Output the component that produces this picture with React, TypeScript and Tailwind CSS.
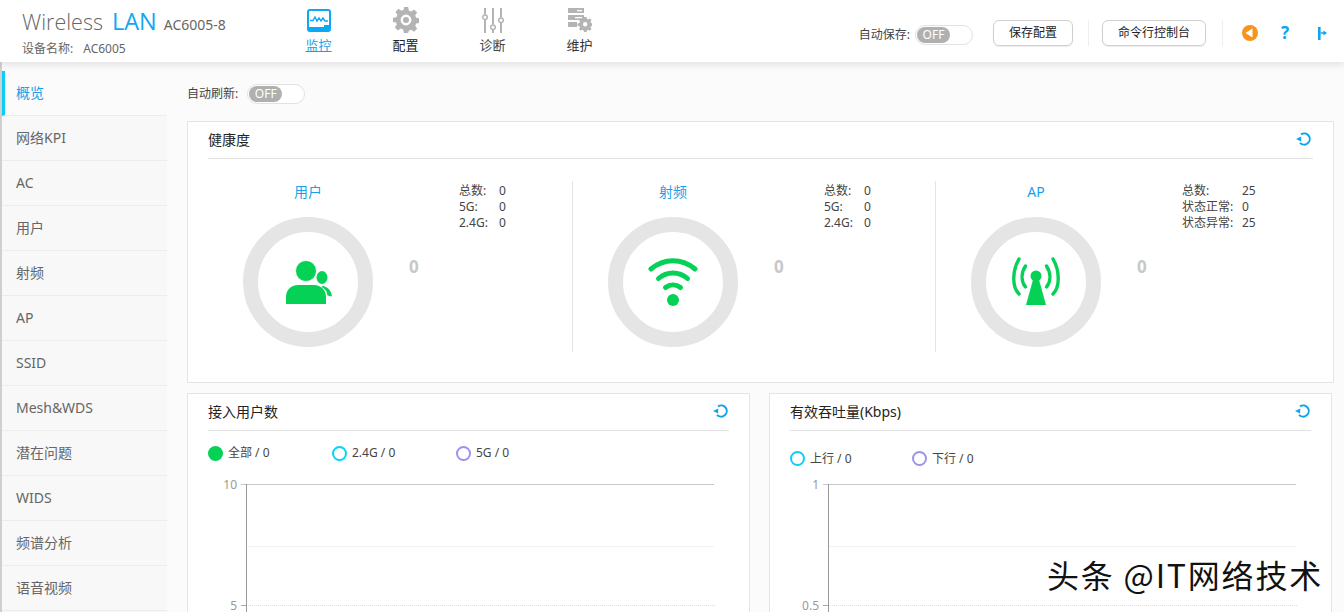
import React from 'react';

const font = 'font-["Noto_Sans","Noto_Sans_CJK_SC",sans-serif]';

const navItems = ['概览', '网络KPI', 'AC', '用户', '射频', 'AP', 'SSID', 'Mesh&WDS', '潜在问题', 'WIDS', '频谱分析', '语音视频'];

const Toggle = () => (
  <div className="flex h-[20px] w-[58px] items-center rounded-full border border-[#e2e2e2] bg-white pl-[1px]">
    <div className="flex h-[16px] w-[33px] items-center justify-center rounded-full bg-[#b0b0b0] text-[12px] leading-none text-white">OFF</div>
  </div>
);

const Refresh = () => (
  <svg width="15" height="14" viewBox="0 0 15 14" fill="none" className="shrink-0">
    <path d="M5 2.400A5.600 5.600 0 1 1 4 10.800" stroke="#0ea5e9" strokeWidth="2" />
    <path d="M0 7L5.200 4.400V9.600Z" fill="#0ea5e9" />
  </svg>
);

const MonitorIcon = () => (
  <svg width="24" height="23" viewBox="0 0 24 23" fill="none">
    <rect x="1" y="1" width="22" height="21" rx="2" stroke="#0aa8f5" strokeWidth="2" />
    <path d="M3 11.500H6L8 8L10 12L12 9L14 12L16 9L18 12H21" stroke="#0aa8f5" strokeWidth="1.400" />
    <path d="M1 18H17V16H23V22H1Z" fill="#0aa8f5" />
  </svg>
);

const GearIcon = () => (
  <svg width="26" height="26" viewBox="0 0 24 24" fill="#b4b4b4">
    <path fillRule="evenodd" d="M10 0h4l.6 3.200 2.200.9 2.700-1.800 2.800 2.800-1.800 2.700.9 2.200 3.200.6v4l-3.200.6-.9 2.200 1.800 2.700-2.800 2.800-2.700-1.800-2.200.9L14 24h-4l-.6-3.200-2.200-.9-2.700 1.800-2.800-2.800 1.800-2.700-.9-2.200L0 14v-4l3.200-.6.900-2.200-1.800-2.700 2.800-2.800 2.700 1.800 2.200-.9ZM12 7a5 5 0 1 0 0 10 5 5 0 0 0 0-10Z" />
    <circle cx="12" cy="12" r="2.800" />
  </svg>
);

const SlidersIcon = () => (
  <svg width="22" height="25" viewBox="0 0 22 25" fill="none" stroke="#b4b4b4" strokeWidth="2">
    <path d="M3 0V6.500M3 12V25M11 0V16.500M11 22V25M19 0V9.500M19 15V25" />
    <circle cx="3" cy="9.200" r="2.300" strokeWidth="1.500" />
    <circle cx="11" cy="19.200" r="2.300" strokeWidth="1.500" />
    <circle cx="19" cy="12.200" r="2.300" strokeWidth="1.500" />
  </svg>
);

const MaintainIcon = () => (
  <svg width="24" height="24" viewBox="0 0 24 24" fill="#b4b4b4">
    <rect x="0" y="0" width="16" height="5" />
    <rect x="0" y="7" width="16" height="5" />
    <rect x="0" y="14" width="9" height="5" />
    <rect x="9" y="2" width="5" height="1.300" fill="#fff" />
    <rect x="7" y="9" width="7" height="1.300" fill="#fff" />
    <path fillRule="evenodd" d="M16 10h2.500l.4 1.800 1.400.6 1.600-1 1.600 1.700-1 1.500.6 1.400 1.900.4v2.400l-1.900.4-.6 1.400 1 1.500-1.600 1.700-1.600-1-1.400.6-.4 1.800H16l-.4-1.800-1.400-.6-1.600 1-1.600-1.700 1-1.500-.6-1.400-1.900-.4v-2.400l1.900-.4.6-1.400-1-1.500 1.600-1.700 1.600 1 1.400-.6ZM17.200 15a2.200 2.200 0 1 0 0 4.400 2.200 2.200 0 0 0 0-4.400Z" transform="translate(0 -1)" />
  </svg>
);

const UserIcon = () => (
  <svg width="48" height="46" viewBox="0 0 48 46" fill="#04d156">
    <ellipse cx="38" cy="18.500" rx="5.500" ry="6.500" />
    <path d="M39 27C44 28 47.500 32 48 37.500L43.500 36.500C43 32 41 29.500 37 28Z" />
    <circle cx="22" cy="12" r="10.500" stroke="#fff" strokeWidth="0.800" />
    <path d="M2 45V38C2 30 8 26 14 26H30C37 26 42 31 42 38V45Z" />
  </svg>
);

const WifiIcon = () => (
  <svg width="50" height="50" viewBox="0 0 50 50" fill="none" stroke="#04d156" strokeWidth="5" strokeLinecap="round">
    <path d="M3 12C16 1 34 1 47 12" />
    <path d="M10.500 21.500C19 14 31 14 39.500 21.500" />
    <path d="M17.500 30.500C22 27 28 27 32.500 30.500" />
    <circle cx="25" cy="43" r="6" fill="#04d156" stroke="none" />
  </svg>
);

const ApIcon = () => (
  <svg width="50" height="50" viewBox="0 0 50 50" fill="none" stroke="#04d156" strokeWidth="3.400" strokeLinecap="round">
    <path d="M8 2C1 14 1 30 8 37" />
    <path d="M14.500 9C10 16 10 24 14.500 30" />
    <path d="M35.500 9C40 16 40 24 35.500 30" />
    <path d="M42 2C49 14 49 30 42 37" />
    <circle cx="25" cy="19" r="5.500" fill="#04d156" stroke="none" />
    <path d="M22.500 21H27.500L35 48H15Z" fill="#04d156" stroke="none" />
  </svg>
);

type HealthProps = {
  title: string;
  icon: React.ReactNode;
  stats: [string, string][];
  width: string;
  statsMl: string;
  divider?: boolean;
  statLabelW: string;
};

const HealthColumn = ({ title, icon, stats, width, statsMl, divider, statLabelW }: HealthProps) => (
  <div className={`flex h-[171px] ${width} shrink-0 ${divider ? 'border-r border-[#e4e4e4]' : ''}`}>
    <div className="flex w-[130px] shrink-0 flex-col items-center">
      <div className="h-[36px] pt-[1px] text-[14px] leading-[20px] text-[#1a9fe8]">{title}</div>
      <div className="flex h-[130px] w-[130px] items-center justify-center rounded-full border-[15px] border-[#e5e5e5]">{icon}</div>
    </div>
    <div className="ml-[36px] mt-[76px] w-[20px] shrink-0 text-[17px] font-bold leading-[20px] text-[#c8c8c8]">0</div>
    <div className={`${statsMl} mt-[2px] text-[12px] leading-[16px] text-[#444]`}>
      {stats.map(([label, value]) => (
        <div key={label} className="flex">
          <span className={statLabelW}>{label}</span>
          <span>{value}</span>
        </div>
      ))}
    </div>
  </div>
);

const Legend = ({ label, kind, width }: { label: string; kind: 'green' | 'cyan' | 'purple'; width: string }) => (
  <div className={`flex ${width} items-center gap-[5px] text-[12px] leading-[16px] text-[#444]`}>
    {kind === 'green' && <span className="h-[15px] w-[15px] rounded-full bg-[#04d156]" />}
    {kind === 'cyan' && <span className="h-[15px] w-[15px] rounded-full border-2 border-[#0cd0f5]" />}
    {kind === 'purple' && <span className="h-[15px] w-[15px] rounded-full border-2 border-[#9b93ec]" />}
    <span>{label}</span>
  </div>
);

const Chart = ({ top, mid, width }: { top: string; mid: string; width: number }) => (
  <svg width={width + 60} height="130" viewBox={`0 0 ${width + 60} 130`} className="block overflow-visible">
    <text x="29" y="5" textAnchor="end" fontSize="12" fill="#999">{top}</text>
    <text x="29" y="126" textAnchor="end" fontSize="12" fill="#999">{mid}</text>
    <path d={`M33 0.500H${width + 38}`} stroke="#c8c8c8" />
    <path d={`M38 62.500H${width + 38}`} stroke="#f2f2f2" />
    <path d="M33 121.500H38" stroke="#aaa" />
    <path d={`M38 121.500H${width + 40}`} stroke="#ddd" strokeDasharray="1 1" />
    <path d="M38.500 0V130" stroke="#999" />
  </svg>
);

export default function App() {
  return (
    <div className={`relative h-screen w-full overflow-hidden bg-[#fbfbfb] ${font}`}>
      <header className="relative z-10 flex h-[62px] items-start bg-white pl-[22px] shadow-[0_2px_8px_rgba(0,0,0,0.12)]">
        <div className="w-[253px] shrink-0 pt-[8px]">
          <div className="flex h-[26px] items-baseline">
            <span className='font-["Open_Sans",sans-serif] text-[21.500px] font-light leading-[26px] text-[#666]'>Wireless</span>
            <span className='ml-[9px] font-["Open_Sans",sans-serif] text-[23.500px] leading-[26px] text-[#11a8f0]'>LAN</span>
            <span className="ml-[7px] text-[14px] text-[#666]">AC6005-8</span>
          </div>
          <div className="mt-[6px] flex text-[12px] leading-[18px] text-[#666]">
            <span>设备名称:</span>
            <span className="ml-[10px]">AC6005</span>
          </div>
        </div>
        <nav className="flex pt-[7px] text-[13px] leading-[16px]">
          {[
            { label: '监控', icon: <MonitorIcon />, cls: 'text-[#1a9fe8] underline' },
            { label: '配置', icon: <GearIcon />, cls: 'text-[#222]' },
            { label: '诊断', icon: <SlidersIcon />, cls: 'text-[#444]' },
            { label: '维护', icon: <MaintainIcon />, cls: 'text-[#333]' },
          ].map(item => (
            <div key={item.label} className="flex w-[87px] flex-col items-center gap-[4px]">
              <div className="flex h-[26px] items-center">{item.icon}</div>
              <span className={item.cls}>{item.label}</span>
            </div>
          ))}
        </nav>
        <div className="ml-auto flex items-center pr-[17px] pt-[20px] text-[12px] leading-[16px]">
          <span className="mr-[5px] mt-[4px] text-[#444]">自动保存:</span>
          <div className="mt-[4px]">
            <Toggle />
          </div>
          <button className="ml-[20px] h-[26px] w-[80px] rounded-[6px] border border-[#cfcfcf] text-[#222] shadow-[0_1px_1px_rgba(0,0,0,0.08)]">保存配置</button>
          <div className="ml-[15px] h-[26px] w-px bg-[#eee]" />
          <button className="ml-[13px] h-[26px] w-[104px] rounded-[6px] border border-[#cfcfcf] text-[#222] shadow-[0_1px_1px_rgba(0,0,0,0.08)]">命令行控制台</button>
          <div className="ml-[16px] h-[26px] w-px bg-[#eee]" />
          <svg width="16" height="16" viewBox="0 0 16 16" className="ml-[19px]">
            <circle cx="8" cy="8" r="8" fill="#f7941d" />
            <path d="M3.500 8L10.500 3.500V12.500Z" fill="#fff" />
          </svg>
          <span className="ml-[21px] w-[12px] text-center text-[17px] font-bold leading-[16px] text-[#0ea5f0]">?</span>
          <svg width="10" height="13" viewBox="0 0 10 13" className="ml-[26px]" fill="#0ea5f0">
            <rect x="1" y="0" width="2.600" height="13" />
            <path d="M3.600 5.200H6.500V3.400L10 6L6.500 8.600V6.800H3.600Z" />
          </svg>
        </div>
      </header>

      <div className="flex h-[550px]">
        <aside className="ml-[2px] mt-[9px] w-[165px] shrink-0 bg-[#f8f8f8]">
          {navItems.map((item, i) => (
            <div
              key={item}
              className={
                i === 0
                  ? 'flex h-[45px] items-center border-b border-l-[3px] border-b-[#ececec] border-l-[#0ccbf5] bg-[#fbfbfb] pb-[2px] pl-[11px] text-[14px] text-[#1a9fe8]'
                  : 'flex h-[45px] items-center border-b border-[#ececec] pb-[2px] pl-[14px] text-[14px] text-[#666]'
              }
            >
              {item}
            </div>
          ))}
        </aside>

        <main className="min-w-0 flex-1 pl-[20px] pr-[10px]">
          <div className="flex h-[59px] items-center pt-[5px] text-[12px] text-[#444]">
            <span className="mr-[9px]">自动刷新:</span>
            <Toggle />
          </div>

          <section className="h-[262px] border border-[#e4e4e4] bg-white px-[20px]">
            <div className="flex h-[37px] items-center justify-between border-b border-[#e2e2e2] pb-[2px] pr-[2px] text-[14px] text-[#222]">
              <span>健康度</span>
              <Refresh />
            </div>
            <div className="ml-[35px] mt-[22px] flex">
              <HealthColumn title="用户" icon={<UserIcon />} stats={[['总数:', '0'], ['5G:', '0'], ['2.4G:', '0']]} width="w-[330px]" statsMl="ml-[30px]" divider statLabelW="w-[40px]" />
              <div className="ml-[35px]">
                <HealthColumn title="射频" icon={<WifiIcon />} stats={[['总数:', '0'], ['5G:', '0'], ['2.4G:', '0']]} width="w-[328px]" statsMl="ml-[30px]" divider statLabelW="w-[40px]" />
              </div>
              <div className="ml-[35px]">
                <HealthColumn title="AP" icon={<ApIcon />} stats={[['总数:', '25'], ['状态正常:', '0'], ['状态异常:', '25']]} width="w-[300px]" statsMl="ml-[25px]" statLabelW="w-[60px]" />
              </div>
            </div>
          </section>

          <div className="mt-[10px] flex items-start gap-[19px]">
            <section className="h-[240px] w-[563px] shrink-0 border border-[#e4e4e4] bg-white px-[20px]">
              <div className="flex h-[37px] items-center justify-between border-b border-[#e2e2e2] pb-[2px] pr-[1px] text-[14px] text-[#222]">
                <span>接入用户数</span>
                <Refresh />
              </div>
              <div className="flex h-[44px] items-center">
                <Legend label="全部 / 0" kind="green" width="w-[124px]" />
                <Legend label="2.4G / 0" kind="cyan" width="w-[124px]" />
                <Legend label="5G / 0" kind="purple" width="w-[124px]" />
              </div>
              <div className="mt-[9px]">
                <Chart top="10" mid="5" width={468} />
              </div>
            </section>
            <section className="h-[240px] w-[563px] shrink-0 border border-[#e4e4e4] bg-white px-[20px]">
              <div className="flex h-[37px] items-center justify-between border-b border-[#e2e2e2] pb-[2px] pr-[1px] text-[14px] text-[#222]">
                <span>有效吞吐量(Kbps)</span>
                <Refresh />
              </div>
              <div className="flex h-[49px] items-center pt-[6px]">
                <Legend label="上行 / 0" kind="cyan" width="w-[122px]" />
                <Legend label="下行 / 0" kind="purple" width="w-[122px]" />
              </div>
              <div className="mt-[4px]">
                <Chart top="1" mid="0.5" width={468} />
              </div>
            </section>
          </div>
        </main>
      </div>

      <div className="absolute left-0 top-0 h-full w-[2px] bg-[#cfcfcf]" />
      <div className='absolute left-[1047px] top-[552px] font-["Noto_Sans_CJK_SC",sans-serif] text-[32px] leading-[44px] tracking-[1.8px] text-[#111] [text-shadow:1px_1px_0_#fff]'>头条 @IT网络技术</div>
    </div>
  );
}
